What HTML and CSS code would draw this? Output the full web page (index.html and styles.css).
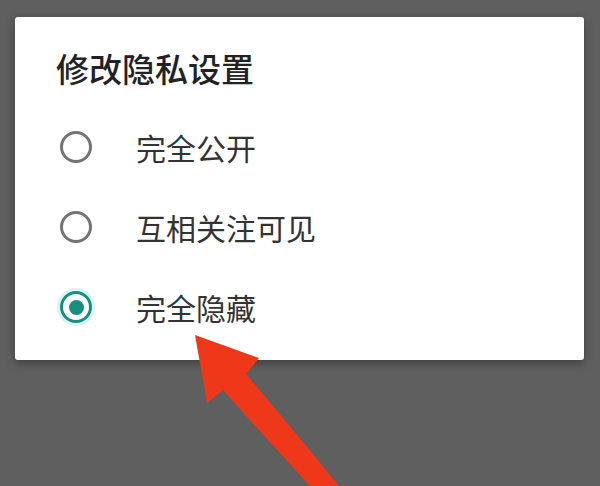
FILE: index.html
```html
<!DOCTYPE html>
<html lang="zh">
<head>
<meta charset="utf-8">
<title>修改隐私设置</title>
<link rel="stylesheet" href="styles.css">
</head>
<body>
<div class="screen">
  <div class="dialog">
    <div class="title">修改隐私设置</div>
    <div class="options">
      <div class="option"><span class="radio"></span><span class="label">完全公开</span></div>
      <div class="option"><span class="radio"></span><span class="label">互相关注可见</span></div>
      <div class="option"><span class="radio checked"></span><span class="label">完全隐藏</span></div>
    </div>
  </div>
  <svg class="arrow" width="600" height="486" viewBox="0 0 600 486" xmlns="http://www.w3.org/2000/svg">
    <path d="M195 335 L259 358 L246 374 Q292 428 339 486 L310 486 Q266 438 223 390 L207 403 Z" fill="#ef3819"/>
  </svg>
</div>
</body>
</html>
```

FILE: styles.css
```css
html, body {
  margin: 0;
  padding: 0;
}
body {
  background: #5f5f5f;
  font-family: "Noto Sans CJK SC", "Noto Sans", sans-serif;
}
.screen {
  position: relative;
  width: 600px;
  height: 486px;
  overflow: hidden;
  padding-top: 17px;
  box-sizing: border-box;
}
.dialog {
  margin-left: 15px;
  width: 569px;
  height: 343px;
  background: #ffffff;
  border-radius: 3px;
  box-shadow: 0 3px 10px rgba(0, 0, 0, 0.35);
  box-sizing: border-box;
  padding-top: 35px;
  display: flex;
  flex-direction: column;
}
.title {
  font-size: 33px;
  line-height: 33px;
  font-weight: 500;
  color: #222222;
  padding-left: 41px;
}
.options {
  margin-top: 22px;
  display: flex;
  flex-direction: column;
}
.option {
  height: 80px;
  display: flex;
  align-items: center;
  padding-left: 45px;
}
.radio {
  width: 32px;
  height: 32px;
  box-sizing: border-box;
  border: 3px solid #747474;
  border-radius: 50%;
  flex: none;
  display: flex;
  align-items: center;
  justify-content: center;
}
.radio.checked {
  border-color: #178f80;
  box-shadow: 0 0 0 3px #d9f5f1;
}
.radio.checked::after {
  content: "";
  width: 15px;
  height: 15px;
  border-radius: 50%;
  background: #178f80;
}
.label {
  margin-left: 44px;
  font-size: 30px;
  line-height: 30px;
  color: #333333;
}
.arrow {
  position: absolute;
  left: 0;
  top: 0;
  pointer-events: none;
}
```
